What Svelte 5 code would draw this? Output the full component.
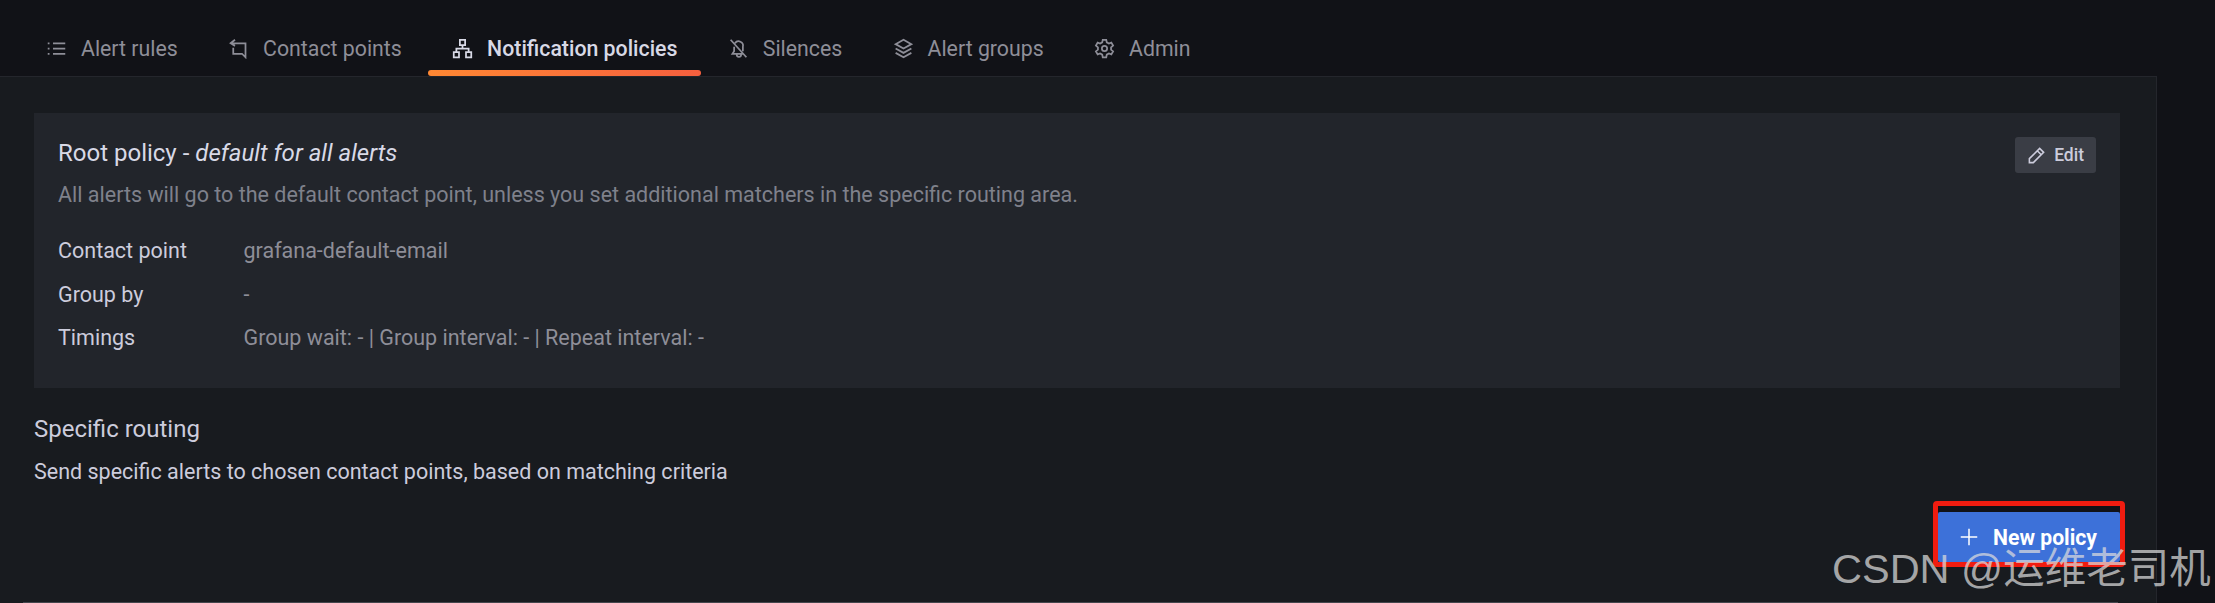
<script>
  const tabs = [
    { label: 'Alert rules', icon: 'list' },
    { label: 'Contact points', icon: 'contact' },
    { label: 'Notification policies', icon: 'tree', active: true },
    { label: 'Silences', icon: 'bell' },
    { label: 'Alert groups', icon: 'layers' },
    { label: 'Admin', icon: 'cog' }
  ];
</script>

<div class="page">
  <nav class="tabs">
    {#each tabs as tab}
      <div class="tab" class:active={tab.active}>
        <svg class="icon" viewBox="0 0 24 24" fill="none" stroke="currentColor" stroke-width="2">
          {#if tab.icon === 'list'}
            <path d="M2 6h2M2 12h2M2 18h2M8 6h14M8 12h14M8 18h14" />
          {:else if tab.icon === 'contact'}
            <path d="M8 2 3 6l5 3M3 6h17v16l-4-4H6v-7" />
          {:else if tab.icon === 'tree'}
            <path d="M9 2h6v6H9zM2 16h6v6H2zM16 16h6v6h-6zM12 8v4M5 16v-4h14v4" />
          {:else if tab.icon === 'bell'}
            <path d="M3 2l18 20M8 6a5 5 0 0 1 9 4v5M7 10v5l-2 3h13M10 18v1a2.500 2.500 0 0 0 5 0v-1" />
          {:else if tab.icon === 'layers'}
            <path d="M12 2 3 7l9 5 9-5zM3 12l9 5 9-5M3 17l9 5 9-5" />
          {:else}
            <circle cx="12" cy="12" r="3" />
            <path d="M10 2h4l.6 3 2.400 1.300 2.800-1 2 3.400-2.300 2 0 2.600 2.300 2-2 3.400-2.800-1-2.400 1.300-.6 3h-4l-.6-3L7 17.700l-2.800 1-2-3.400 2.300-2v-2.600l-2.300-2 2-3.400 2.800 1L9.400 5z" />
          {/if}
        </svg>
        <span>{tab.label}</span>
      </div>
    {/each}
  </nav>

  <main class="panel">
    <section class="card">
      <div class="card-head">
        <div>
          <h2>Root policy - <em>default for all alerts</em></h2>
          <p class="muted">All alerts will go to the default contact point, unless you set additional matchers in the specific routing area.</p>
        </div>
        <button class="edit" type="button">
          <svg viewBox="0 0 24 24" fill="none" stroke="currentColor" stroke-width="2">
            <path d="M3 21v-5L16 3l5 5L8 21zM13 6l5 5" />
          </svg>
          Edit
        </button>
      </div>
      <dl>
        <dt>Contact point</dt><dd>grafana-default-email</dd>
        <dt>Group by</dt><dd>-</dd>
        <dt>Timings</dt><dd>Group wait: - | Group interval: - | Repeat interval: -</dd>
      </dl>
    </section>

    <h3>Specific routing</h3>
    <p class="desc">Send specific alerts to chosen contact points, based on matching criteria</p>

    <div class="actions">
      <div class="highlight">
        <button class="primary" type="button">
          <svg viewBox="0 0 24 24" fill="none" stroke="currentColor" stroke-width="2">
            <path d="M12 1v22M1 12h22" />
          </svg>
          New policy
        </button>
      </div>
    </div>
    <div class="baseline"></div>
  </main>

  <div class="watermark">CSDN @运维老司机</div>
</div>

<style>
  :global(body) { margin: 0; background: #111217; }
  .page {
    position: relative; width: 2215px; height: 603px; overflow: hidden;
    background: #111217; color: #ccccdc;
    font-family: Roboto, "Liberation Sans", sans-serif; font-size: 21.5px;
  }
  .tabs { display: flex; height: 76px; padding-left: 22px; gap: 2.3px; box-sizing: border-box; font-size: 21.3px; }
  .tab {
    display: flex; align-items: center; gap: 14px; height: 76px; padding: 20px 24px 0; box-sizing: border-box;
    color: #8e8e98; position: relative;
  }
  .tab.active { color: #d8d9e6; font-weight: 500; }
  .tab.active::after {
    content: ''; position: absolute; left: 0; right: 0; bottom: 0; height: 6px; border-radius: 3px;
    background: linear-gradient(90deg, #ff8833, #f55f3e);
  }
  .icon { width: 21px; height: 21px; flex: none; }
  .panel {
    width: 2157px; height: 527px; box-sizing: border-box; padding: 36px 36px 0 34px;
    background: #181b1f; border-top: 1px solid #24262c; border-right: 1px solid #24262c;
    position: relative;
  }
  .card { background: #22252b; padding: 24px; height: 275px; box-sizing: border-box; }
  .card-head { display: flex; justify-content: space-between; align-items: flex-start; }
  h2 { margin: 1px 0 14px; font-size: 24px; font-weight: 400; line-height: 30px; color: #d8d9e6; }
  .muted { margin: 0; color: #7f818b; line-height: 26px; }
  .edit {
    display: flex; align-items: center; gap: 8px; height: 36px; padding: 0 12px; margin-right: 0;
    background: #3a3d45; color: #ccccdc; border: 0; border-radius: 3px; font: 500 17.5px Roboto, sans-serif;
  }
  .edit svg { width: 19px; height: 19px; }
  dl { display: grid; grid-template-columns: 185.5px 1fr; margin: 30px 0 0; row-gap: 17.5px; line-height: 26px; }
  dt { color: #ccccdc; }
  dd { margin: 0; color: #8e8e98; }
  h3 { margin: 26px 0 0; font-size: 24px; font-weight: 400; line-height: 30px; color: #ccccdc; }
  .desc { margin: 15px 0 0; line-height: 26px; color: #ccccdc; }
  .actions { display: flex; justify-content: flex-end; margin: 16px -5px 0 0; }
  .highlight {
    width: 192px; height: 66px; box-sizing: border-box; padding-top: 6px;
    border: 5px solid #f01c10; border-radius: 4px; background: #111217;
  }
  .primary {
    display: flex; align-items: center; gap: 15px; width: 100%; height: 50px; padding: 0 0 0 22px; box-sizing: border-box;
    background: #3d71d9; color: #fff; border: 0; border-radius: 2px; font: 700 21.2px Roboto, sans-serif;
  }
  .primary svg { width: 18px; height: 18px; }
  .baseline { position: absolute; left: 23px; bottom: 0; width: 2095px; height: 1px; background: #44464d; }
  .watermark {
    position: absolute; left: 1832px; top: 535px; font: 41.500px "Liberation Sans", "Noto Sans CJK SC", sans-serif;
    color: rgba(220, 220, 220, 0.72); white-space: nowrap;
  }
</style>
